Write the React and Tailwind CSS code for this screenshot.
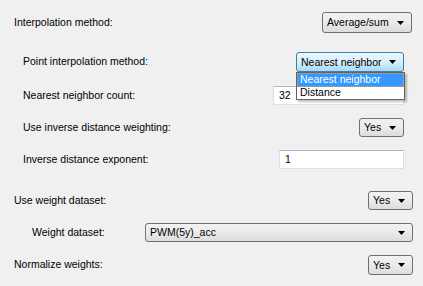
import { useState } from 'react';

const Arrow = () => (
  <svg width="7" height="4" viewBox="0 0 7 4" className="shrink-0">
    <path d="M0 0h7L3.5 4z" fill="#000" />
  </svg>
);

const Combo = ({ value, className = '', focused }) => (
  <div
    className={`flex items-center justify-between rounded-[3px] border pl-[4px] pr-[7px] ${
      focused
        ? 'border-[#3c7fb1] bg-gradient-to-b from-[#eaf6fd] via-[#d9f0fc] to-[#a7d9f5]'
        : 'border-[#707070] bg-gradient-to-b from-[#f2f2f2] via-[#ebebeb] to-[#dcdcdc]'
    } ${className}`}
  >
    <span className="leading-none">{value}</span>
    <Arrow />
  </div>
);

const Input = ({ value, className = '' }) => (
  <div className={`flex items-center border border-[#dcdfe6] border-t-[#b5b8bf] bg-white pl-[5px] ${className}`}>
    <span className="leading-none">{value}</span>
  </div>
);

const Row = ({ label, indent, className = '', children }) => (
  <div className={`flex items-center justify-between ${className}`}>
    <span className={indent}>{label}</span>
    {children}
  </div>
);

export default function App() {
  const [open] = useState(true);

  return (
    <div
      className="relative h-[286px] w-[423px] overflow-hidden bg-[#f0f0f0] text-[10.5px] text-black"
      style={{ fontFamily: '"Liberation Sans", Arial, sans-serif' }}
    >
      <div className="flex flex-col pl-[14px] pt-[12px]">
        <Row label="Interpolation method:" className="h-[21px] pr-[11px]">
          <Combo value="Average/sum" className="h-[21px] w-[90px]" />
        </Row>

        <div className="flex flex-col pl-[9px] pr-[19px]">
          <Row label="Point interpolation method:" className="mt-[19px] h-[20px]">
            <div className="relative">
              <Combo value="Nearest neighbor" focused className="h-[20px] w-[108px]" />
              {open && (
                <div className="absolute left-0 top-[20px] z-10 w-[109px] border border-[#646464] bg-white shadow-[2px_2px_2px_rgba(0,0,0,0.25)]">
                  <div className="flex h-[14px] items-center border border-dotted border-[#e8a24a] bg-[#3399ff] pl-[2px] text-white">
                    Nearest neighbor
                  </div>
                  <div className="flex h-[12px] items-center pl-[3px]">Distance</div>
                </div>
              )}
            </div>
          </Row>
          <Row label="Nearest neighbor count:" className="mt-[14px] h-[19px]">
            <Input value="32" className="h-[19px] w-[131px]" />
          </Row>
          <Row label="Use inverse distance weighting:" className="mt-[13px] h-[19px]">
            <Combo value="Yes" className="h-[19px] w-[45px]" />
          </Row>
          <Row label="Inverse distance exponent:" className="mt-[13px] h-[19px]">
            <Input value="1" className="h-[19px] w-[125px]" />
          </Row>
        </div>

        <Row label="Use weight dataset:" className="mt-[22px] h-[19px] pr-[10px]">
          <Combo value="Yes" className="h-[19px] w-[45px]" />
        </Row>
        <div className="mt-[13px] flex h-[19px] items-center pr-[10px]">
          <span className="w-[131px] pl-[18px]">Weight dataset:</span>
          <Combo value="PWM(5y)_acc" className="h-[19px] flex-1" />
        </div>
        <Row label="Normalize weights:" className="mt-[13px] h-[20px] pr-[10px]">
          <Combo value="Yes" className="h-[20px] w-[45px]" />
        </Row>
      </div>
    </div>
  );
}
